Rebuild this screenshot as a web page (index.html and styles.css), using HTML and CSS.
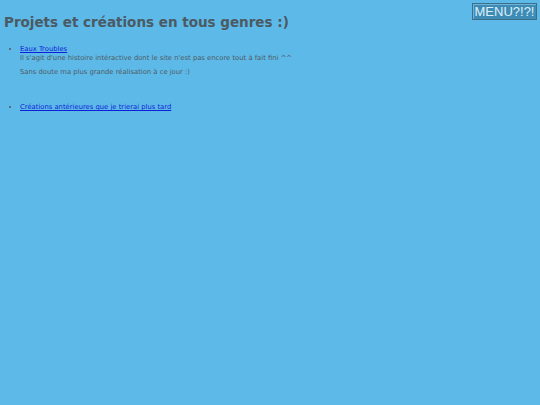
FILE: index.html
```html
<!DOCTYPE html>
<html lang="fr">
<head>
<meta charset="utf-8">
<title>Projets</title>
<link rel="stylesheet" href="styles.css">
</head>
<body>
<button class="menu">MENU?!?!</button>
<h1 class="title">Projets et créations en tous genres :)</h1>
<ul class="list">
<li><a href="#">Eaux Troubles</a><br>Il s'agit d'une histoire intéractive dont le site n'est pas encore tout à fait fini ^^
<p class="note">Sans doute ma plus grande réalisation à ce jour :)</p></li>
</ul>
<ul class="list second">
<li><a href="#">Créations antérieures que je trierai plus tard</a></li>
</ul>
</body>
</html>
```
FILE: styles.css
```css
html, body { margin: 0; padding: 0; }
body {
  background: #5db9e8;
  font-family: "DejaVu Sans", sans-serif;
  color: #4f5b63;
  padding: 0 4px;
  min-height: 405px;
}
.menu {
  position: absolute;
  top: 3px;
  left: 472px;
  width: 65px;
  height: 17px;
  font-family: "Liberation Sans", Arial, sans-serif;
  font-size: 13px;
  color: #dcf0fa;
  background: #3e8cb5;
  border: 1px solid #3a6f8c;
  box-shadow: inset 1px 1px 0 #6fb4d8;
  padding: 0;
  line-height: 15px;
  text-align: center;
}
.title {
  margin: 0;
  padding-top: 14px;
  font-size: 13.5px;
  line-height: 16px;
  color: #4b5a63;
}
.list {
  margin: 15px 0 0;
  padding-left: 16px;
  font-size: 6.8px;
  line-height: 9px;
}
.list a { color: #0f1fd8; }
.note { margin: 5px 0 0; }
.second { margin-top: 26px; }
```
